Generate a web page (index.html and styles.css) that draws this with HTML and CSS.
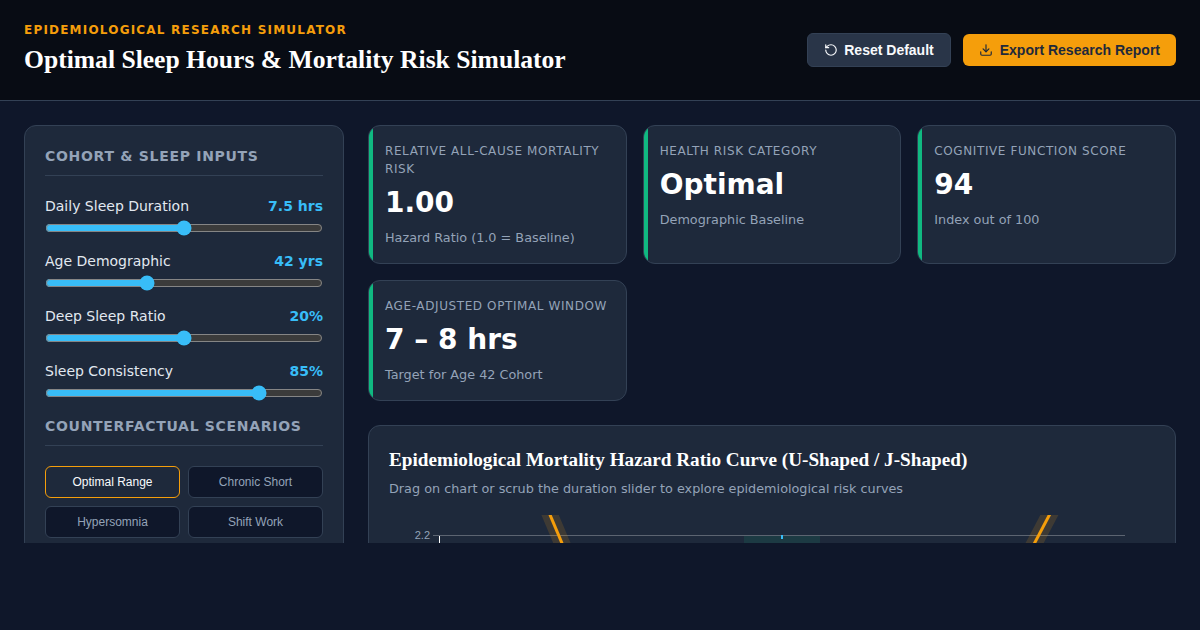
FILE: index.html
```html
<!DOCTYPE html>
<html lang="en">
<head>
    <meta charset="UTF-8">
    <meta name="viewport" content="width=device-width, initial-scale=1.0">
    <title>Optimal Sleep Hours &amp; Mortality Risk Simulator</title>
    <link rel="stylesheet" href="styles.css">
</head>
<body>
    <header class="header">
        <div>
            <div class="eyebrow">Epidemiological Research Simulator</div>
            <h1 class="title">Optimal Sleep Hours &amp; Mortality Risk Simulator</h1>
        </div>
        <div class="actions">
            <button class="btn btn-dark">
                <svg class="btn-icon" viewBox="0 0 24 24"><path d="M3 12a9 9 0 1 0 9-9 9.75 9.75 0 0 0-6.74 2.74L3 8"/><path d="M3 3v5h5"/></svg>
                Reset Default
            </button>
            <button class="btn btn-amber">
                <svg class="btn-icon" viewBox="0 0 24 24"><path d="M21 15v4a2 2 0 0 1-2 2H5a2 2 0 0 1-2-2v-4"/><path d="M7 10l5 5 5-5"/><path d="M12 15V3"/></svg>
                Export Research Report
            </button>
        </div>
    </header>

    <main class="layout">
        <aside class="panel">
            <h2 class="panel-title">Cohort &amp; Sleep Inputs</h2>
            <div class="field">
                <div class="field-row"><span>Daily Sleep Duration</span><span class="field-value">7.5 hrs</span></div>
                <input class="slider" type="range" min="3" max="12" step="0.1" value="7.5">
            </div>
            <div class="field">
                <div class="field-row"><span>Age Demographic</span><span class="field-value">42 yrs</span></div>
                <input class="slider" type="range" min="18" max="85" value="42">
            </div>
            <div class="field">
                <div class="field-row"><span>Deep Sleep Ratio</span><span class="field-value">20%</span></div>
                <input class="slider" type="range" min="5" max="35" value="20">
            </div>
            <div class="field">
                <div class="field-row"><span>Sleep Consistency</span><span class="field-value">85%</span></div>
                <input class="slider" type="range" min="30" max="100" value="85">
            </div>
            <h2 class="panel-title">Counterfactual Scenarios</h2>
            <div class="scenarios">
                <button class="scenario scenario-active">Optimal Range</button>
                <button class="scenario">Chronic Short</button>
                <button class="scenario">Hypersomnia</button>
                <button class="scenario">Shift Work</button>
            </div>
        </aside>

        <section class="results">
            <div class="cards">
                <div class="card">
                    <div class="card-label">Relative All-Cause Mortality Risk</div>
                    <div class="card-value">1.00</div>
                    <div class="card-sub">Hazard Ratio (1.0 = Baseline)</div>
                </div>
                <div class="card">
                    <div class="card-label">Health Risk Category</div>
                    <div class="card-value">Optimal</div>
                    <div class="card-sub">Demographic Baseline</div>
                </div>
                <div class="card">
                    <div class="card-label">Cognitive Function Score</div>
                    <div class="card-value">94</div>
                    <div class="card-sub">Index out of 100</div>
                </div>
                <div class="card">
                    <div class="card-label">Age-Adjusted Optimal Window</div>
                    <div class="card-value">7 – 8 hrs</div>
                    <div class="card-sub">Target for Age 42 Cohort</div>
                </div>
            </div>

            <div class="chart-card">
                <h2 class="chart-title">Epidemiological Mortality Hazard Ratio Curve (U-Shaped / J-Shaped)</h2>
                <p class="chart-sub">Drag on chart or scrub the duration slider to explore epidemiological risk curves</p>
                <svg class="chart" viewBox="0 0 766 120">
                    <rect class="chart-band" x="355" y="21" width="76" height="99"/>
                    <line class="chart-grid" x1="44" y1="20.5" x2="736" y2="20.5"/>
                    <line class="chart-axis" x1="50.5" y1="21" x2="50.5" y2="120"/>
                    <text class="chart-tick" x="41" y="24" text-anchor="end">2.2</text>
                    <path class="chart-halo" d="M159 -5 L175 33"/>
                    <path class="chart-halo" d="M663 -5 L643 33"/>
                    <path class="chart-line" d="M159 -5 L175 33"/>
                    <path class="chart-line" d="M663 -5 L643 33"/>
                    <line class="chart-marker" x1="393" y1="20" x2="393" y2="24"/>
                </svg>
            </div>
        </section>
    </main>
</body>
</html>
```

FILE: styles.css
```css
* {
    box-sizing: border-box;
}
body {
    margin: 0;
    background: #0f172a;
    color: #f8fafc;
    font-family: "DejaVu Sans", sans-serif;
    height: 100vh;
    overflow: hidden;
}
.header {
    display: flex;
    justify-content: space-between;
    align-items: center;
    height: 101px;
    padding: 20px 24px;
    background: #080c14;
    border-bottom: 1px solid #334155;
}
.eyebrow {
    font-size: 12px;
    font-weight: 700;
    letter-spacing: 1.2px;
    line-height: 18px;
    text-transform: uppercase;
    color: #f59e0b;
    margin-bottom: 1px;
}
.title {
    margin: 0;
    font-family: "Liberation Serif", serif;
    font-size: 25.6px;
    font-weight: 700;
    line-height: 39px;
    color: #fff;
}
.actions {
    display: flex;
    align-items: center;
    gap: 12px;
}
.btn {
    display: flex;
    align-items: center;
    gap: 6px;
    padding: 8px 16px;
    border-radius: 6px;
    font-family: "Liberation Sans", sans-serif;
    font-size: 14px;
    font-weight: 700;
    line-height: 16px;
}
.btn-icon {
    width: 14px;
    height: 14px;
    fill: none;
    stroke: currentColor;
    stroke-width: 2;
    stroke-linecap: round;
    stroke-linejoin: round;
}
.btn-dark {
    background: #293548;
    border: 1px solid #334155;
    color: #f8fafc;
}
.btn-amber {
    gap: 7px;
    background: #f59e0b;
    border: none;
    color: #1e293b;
}
.layout {
    display: grid;
    grid-template-columns: 320px 1fr;
    gap: 24px;
    align-items: start;
    height: 442px;
    padding: 24px;
    overflow: hidden;
}
.panel {
    background: #1e293b;
    border: 1px solid #334155;
    border-radius: 12px;
    padding: 20px;
}
.panel-title {
    margin: 0 0 20px;
    padding-bottom: 8px;
    border-bottom: 1px solid #334155;
    font-size: 14px;
    font-weight: 700;
    letter-spacing: 0.7px;
    line-height: 21px;
    text-transform: uppercase;
    color: #94a3b8;
}
.field {
    margin-bottom: 15px;
}
.field-row {
    display: flex;
    justify-content: space-between;
    margin-bottom: 3px;
    font-size: 14px;
    line-height: 21px;
    color: #e2e8f0;
}
.field-value {
    font-weight: 700;
    color: #38bdf8;
}
.slider {
    display: block;
    width: 100%;
    margin: 0;
    height: 16px;
    accent-color: #38bdf8;
    color-scheme: dark;
}
.scenarios {
    display: grid;
    grid-template-columns: 1fr 1fr;
    gap: 8px;
}
.scenario {
    height: 32px;
    background: #0f172a;
    border: 1px solid #334155;
    border-radius: 6px;
    font-family: "Liberation Sans", sans-serif;
    font-size: 12px;
    color: #94a3b8;
}
.scenario-active {
    background: #1e293b;
    border-color: #f59e0b;
    color: #f8fafc;
}
.results {
    min-width: 0;
}
.cards {
    display: grid;
    grid-template-columns: repeat(3, 1fr);
    gap: 16px;
    margin-bottom: 24px;
}
.card {
    position: relative;
    overflow: hidden;
    background: #1e293b;
    border: 1px solid #334155;
    border-radius: 12px;
    padding: 16px;
}
.card::before {
    content: "";
    position: absolute;
    top: 0;
    bottom: 0;
    left: 0;
    width: 4px;
    background: #10b981;
}
.card-label {
    font-size: 12px;
    line-height: 18px;
    letter-spacing: 0.6px;
    text-transform: uppercase;
    color: #94a3b8;
}
.card-value {
    margin: 8px 0;
    font-size: 28px;
    font-weight: 700;
    line-height: 34px;
    color: #fff;
}
.card-sub {
    font-size: 12.8px;
    line-height: 19px;
    color: #94a3b8;
}
.chart-card {
    background: #1e293b;
    border: 1px solid #334155;
    border-radius: 12px;
    padding: 20px;
}
.chart-title {
    margin: 0 0 5px;
    font-family: "Liberation Serif", serif;
    font-size: 19.2px;
    font-weight: 700;
    line-height: 28px;
    color: #fff;
}
.chart-sub {
    margin: 0 0 17px;
    font-size: 12.8px;
    line-height: 19px;
    color: #94a3b8;
}
.chart {
    display: block;
    width: 100%;
}
.chart-band {
    fill: #10b981;
    fill-opacity: 0.12;
}
.chart-grid {
    stroke: #fff;
    stroke-opacity: 0.28;
}
.chart-axis {
    stroke: #fff;
}
.chart-tick {
    font-family: "Liberation Sans", sans-serif;
    font-size: 11px;
    fill: #94a3b8;
}
.chart-halo {
    fill: none;
    stroke: #f59e0b;
    stroke-opacity: 0.15;
    stroke-width: 16;
}
.chart-line {
    fill: none;
    stroke: #f59e0b;
    stroke-width: 3;
}
.chart-marker {
    stroke: #38bdf8;
    stroke-width: 2;
}
```
